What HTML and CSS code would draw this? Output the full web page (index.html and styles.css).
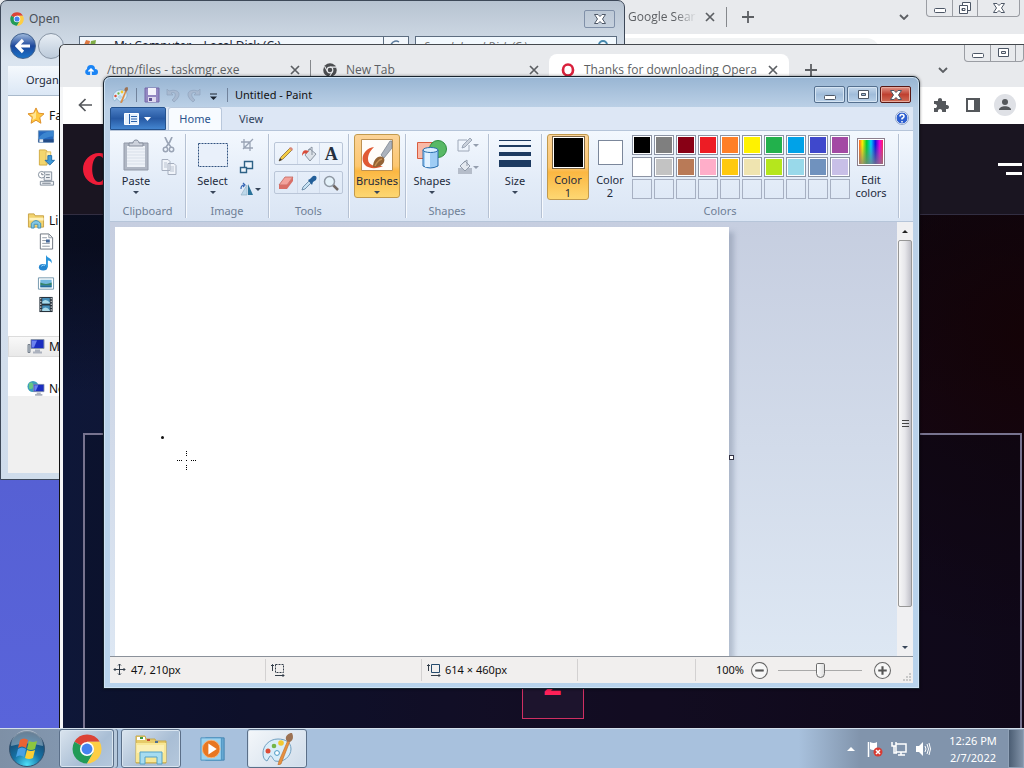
FILE: index.html
```html
<!DOCTYPE html>
<html lang="en">
<head>
  <meta charset="UTF-8">
  <title>Untitled - Paint</title>
  <link rel="stylesheet" href="styles.css">
</head>
<body>
  <!-- shared icons -->
  <svg class="defs" aria-hidden="true">
    <symbol id="chrome" viewBox="0 0 32 32">
      <path d="M16 16 2.600 8.300A15.500 15.500 0 0 1 29.500 8.300H16z" fill="#dc4437"/>
      <path d="M16 16 2.600 8.300A15.500 15.500 0 0 0 16 31.500l7-12z" fill="#229b57"/>
      <path d="M16 8.300h13.500A15.500 15.500 0 0 1 16 31.500l7-12z" fill="#fdce45"/>
      <circle cx="16" cy="16" r="7.500" fill="#fff"/>
      <circle cx="16" cy="16" r="5.800" fill="#4583ee"/>
    </symbol>
    <symbol id="chrome-gray" viewBox="0 0 32 32">
      <circle cx="16" cy="16" r="15.500" fill="#4b4d50"/>
      <circle cx="16" cy="16" r="6.500" fill="none" stroke="#e8eaed" stroke-width="2.500"/>
      <path d="M16 9.500h14M10.400 19.300 3.500 7.500M21.600 19.300l-7 12" stroke="#e8eaed" stroke-width="2.500"/>
    </symbol>
    <symbol id="palette" viewBox="0 0 32 32">
      <path d="M17 6C8 6 2 13 2 20c0 4 1 7 4 8l3-5c2-1 3 4 5 5 9 2 16-5 16-12 0-7-6-10-13-10z" fill="#d9edf9" stroke="#6f9fc0" stroke-width="1"/>
      <circle cx="7" cy="18" r="2.500" fill="#dc4c35"/>
      <circle cx="13" cy="13" r="2.300" fill="#73b548"/>
      <circle cx="20" cy="10" r="2.800" fill="#f2c830"/>
      <circle cx="16" cy="20" r="2.400" fill="#fff" stroke="#4a99c4"/>
      <path d="m27 7 2 1-9 23-3 1 1-4z" fill="#e8913f" stroke="#b86b28" stroke-width=".6"/>
      <path d="M26 8c-3-3 0-8 5-8 2 4 1 8-3 9z" fill="#9c7253"/>
    </symbol>
    <symbol id="x" viewBox="0 0 10 10"><path d="m1 1 8 8M9 1 1 9" fill="none" stroke="currentColor" stroke-width="1.700"/></symbol>
    <symbol id="plus" viewBox="0 0 12 12"><path d="M6 0v12M0 6h12" stroke="currentColor" stroke-width="1.800"/></symbol>
    <symbol id="chev" viewBox="0 0 10 6"><path d="m1 1 4 4 4-4" fill="none" stroke="currentColor" stroke-width="1.800"/></symbol>
    <symbol id="w-min" viewBox="0 0 14 12"><rect x="1.500" y="6.500" width="11" height="4" rx="1" fill="#fff" stroke="#4d5766"/></symbol>
    <symbol id="w-max" viewBox="0 0 14 12"><path d="M2.500 1.500h10v8h-10zM5.500 4.500h4v2h-4z" fill="#fff" fill-rule="evenodd" stroke="#4d5766"/></symbol>
    <symbol id="w-restore" viewBox="0 0 14 12"><path d="M4.500.5h8v8h-8z" fill="#fff" stroke="#4d5766"/><path d="M1.500 3.500h8v8h-8zM4 6.500h3v2H4z" fill="#fff" fill-rule="evenodd" stroke="#4d5766"/></symbol>
    <symbol id="w-close" viewBox="0 0 14 12"><path d="M1.500 1.500H5l2 2 2-2h3.500L9.500 6l3 4.500H9l-2-2-2 2H1.500l3-4.500z" fill="#fff" stroke="#4d5766"/></symbol>
    <symbol id="monitor" viewBox="0 0 18 16">
      <path d="M4 1h13v9H4z" fill="#1b2ec0" stroke="#8794ac"/><path d="m5 2 5 0-3 7H5z" fill="#6c83ef"/>
      <path d="M8 11h5v2H8zM6 13h9v2H6z" fill="#acb2be"/>
    </symbol>
  </svg>

  <main class="desktop">
    <section class="window chrome-back" aria-label="Google Search">
      <div class="tabstrip">
        <span class="tab-title fade">Google Sear</span>
        <button class="icon-btn" aria-label="Close tab"><svg class="i10"><use href="#x"/></svg></button>
        <span class="tab-sep"></span>
        <button class="icon-btn" aria-label="New tab"><svg class="i12"><use href="#plus"/></svg></button>
        <button class="icon-btn push" aria-label="Search tabs"><svg class="i10x6"><use href="#chev"/></svg></button>
        <div class="glass-controls">
          <button aria-label="Minimize"><svg><use href="#w-min"/></svg></button>
          <button aria-label="Restore"><svg><use href="#w-restore"/></svg></button>
          <button class="wide" aria-label="Close"><svg><use href="#w-close"/></svg></button>
        </div>
      </div>
      <div class="omnibox"></div>
    </section>

    <section class="window open-dialog" aria-label="Open">
      <header class="dialog-title">
        <svg class="i14"><use href="#chrome"/></svg>
        <span>Open</span>
        <button class="dialog-close" aria-label="Close"><svg><use href="#w-close"/></svg></button>
      </header>
      <div class="nav-row">
        <button class="nav-back" aria-label="Back"><svg viewBox="0 0 16 16"><path d="M8 2 2 8l6 6M2 8h13" fill="none" stroke="#fff" stroke-width="3.200"/></svg></button>
        <button class="nav-fwd" aria-label="Forward"></button>
        <div class="address">
          <svg class="i14" viewBox="0 0 14 14"><path d="m3 1 4 1-1 5-5-1z" fill="#dd7841"/><path d="m8 2 5-1-1 6-5 0z" fill="#80ad47"/><path d="m1 7 5 1-1 5-4-1z" fill="#4f8bd3"/><path d="m7 8 5 0-1 5-5 0z" fill="#edc741"/></svg>
          <span>▸ My Computer ▸ Local Disk (C:) ▸</span>
        </div>
        <button class="refresh" aria-label="Refresh"><svg viewBox="0 0 12 12"><path d="M9 2a5 5 0 1 0 2 4" fill="none" stroke="#5b7a9a" stroke-width="1.500"/></svg></button>
        <div class="search-box"><input type="text" aria-label="Search" placeholder="Search Local Disk (C:)"><svg viewBox="0 0 12 12"><circle cx="6" cy="5" r="4" fill="none" stroke="#4688ad" stroke-width="2"/></svg></div>
      </div>
      <div class="dialog-toolbar">Organize</div>
      <nav class="places">
        <ul>
          <li class="head"><svg viewBox="0 0 18 18"><path d="m9 1 2.500 5.500 6 .7-4.500 4 1.200 6L9 14l-5.200 3.200 1.200-6-4.500-4 6-.7z" fill="#ffc93f" stroke="#dc8b24"/><path d="M9 4v8l-4 2 1-4-3-2 4-1z" fill="#ffe591"/></svg>Favorites</li>
          <li><svg viewBox="0 0 18 18"><path d="M1 3h16v12H1z" fill="#2468be" stroke="#6b91b8"/><path d="M1 11c5-7 10-7 16-8v6c-6 0-9 2-14 4z" fill="#3b85cf"/><path d="M1 12h16v3H1z" fill="#244c87"/><path d="M2 12h4v3H2z" fill="#e5edf6"/></svg></li>
          <li><svg viewBox="0 0 18 18"><path d="M2 1h6l2 1v15H2z" fill="#f3d66e" stroke="#d0aa42"/><path d="M9 3h5v12H9z" fill="#ffeda7" stroke="#dbb95b"/><path d="M11 7h4v5h3l-5 5-5-5h3z" fill="#3d99d9" stroke="#236ca9"/></svg></li>
          <li><svg viewBox="0 0 18 18"><path d="M7 2h8v9H7zM3 12h14v4H3z" fill="#eef1f4" stroke="#828d9b"/><circle cx="4.500" cy="5" r="3.500" fill="#fff" stroke="#828d9b"/><path d="M4.500 3v2h2M9 5h4M9 8h4M5 14h9" fill="none" stroke="#6d7885"/></svg></li>
          <li class="head gap"><svg viewBox="0 0 18 18"><path d="M1 2h6l1 2h9v12H1z" fill="#f2d36e" stroke="#c8a244"/><path d="M2 6h15v3H2z" fill="#fff2bc"/><path d="M4 17v-5q5-6 10 0v5h-3v-4H7v4z" fill="#82c6e3" stroke="#408fb8"/></svg>Libraries</li>
          <li><svg viewBox="0 0 18 18"><path d="M3 1h9l4 4v12H3z" fill="#fff" stroke="#6a727c"/><path d="M12 1v4h4M5 5h5M5 8h4M5 11h8M5 14h8" fill="none" stroke="#8f98a3"/><path d="M9 7h4v3H9z" fill="#456899"/></svg></li>
          <li><svg viewBox="0 0 18 18"><ellipse cx="6" cy="14" rx="4.500" ry="3.500" fill="#2385d0"/><path d="M9 14V1c2 4 7 3 6 9-1-2-2-3-4-3v7z" fill="#2995dc"/><path d="M4 13q2-2 4-1" stroke="#9edbff" fill="none"/></svg></li>
          <li><svg viewBox="0 0 18 18"><path d="M1 3h16v12H1z" fill="#fff" stroke="#7196ac"/><path d="M3 5h12v8H3z" fill="#73b8df"/><path d="M3 8q6 3 12 0v3H3z" fill="#36866a"/><path d="M3 11h12v2H3z" fill="#236b9b"/></svg></li>
          <li><svg viewBox="0 0 18 18"><path d="M2 1h14v16H2z" fill="#27323c"/><path d="M5 2h8v6H5zM5 10h8v6H5z" fill="#448db8"/><path d="M5 6q4-4 8 1v1H5zM5 14q4-4 8 1v1H5z" fill="#a9d8e7"/><path d="M3.500 2v15M14.500 2v15" stroke="#fff" stroke-dasharray="1.500 1.500"/></svg></li>
          <li class="head gap selected"><svg viewBox="0 0 18 16"><path d="M1 6h2v8H1z" fill="#bcc5cf" stroke="#77818d"/><use href="#monitor"/></svg>My Computer</li>
          <li class="head gap"><svg viewBox="0 0 18 16"><circle cx="6" cy="6" r="5.500" fill="#3c9fbb"/><path d="M2 3q4-3 4 2t-4 3z" fill="#68c783"/><use href="#monitor" x="3" y="3" width="15" height="13"/></svg>Network</li>
        </ul>
      </nav>
    </section>

    <section class="window opera-win" aria-label="Thanks for downloading Opera">
      <div class="tabstrip">
        <div class="tab first">
          <svg class="i14" viewBox="0 0 14 14"><path d="M3.500 12A3.200 3.200 0 0 1 3 6a4 4 0 0 1 8 0 3 3 0 0 1 0 6z" fill="#1a84f5"/><path d="M7 12V6M4.500 8.500 7 6l2.500 2.500" fill="none" stroke="#fff" stroke-width="1.500"/></svg>
          <span class="tab-title">/tmp/files - taskmgr.exe</span>
          <button class="icon-btn" aria-label="Close tab"><svg class="i10"><use href="#x"/></svg></button>
        </div>
        <span class="tab-sep"></span>
        <div class="tab">
          <svg class="i14"><use href="#chrome-gray"/></svg>
          <span class="tab-title">New Tab</span>
          <button class="icon-btn" aria-label="Close tab"><svg class="i10"><use href="#x"/></svg></button>
        </div>
        <div class="tab active">
          <svg class="i14" viewBox="0 0 14 14"><ellipse cx="7" cy="7" rx="5" ry="5.500" fill="none" stroke="#d9213c" stroke-width="2.700"/></svg>
          <span class="tab-title">Thanks for downloading Opera</span>
          <button class="icon-btn" aria-label="Close tab"><svg class="i10"><use href="#x"/></svg></button>
        </div>
        <button class="icon-btn newtab" aria-label="New tab"><svg class="i12"><use href="#plus"/></svg></button>
        <button class="icon-btn push" aria-label="Search tabs"><svg class="i10x6"><use href="#chev"/></svg></button>
        <div class="glass-controls">
          <button aria-label="Minimize"><svg><use href="#w-min"/></svg></button>
          <button aria-label="Maximize"><svg><use href="#w-max"/></svg></button>
          <button class="clip" aria-label="Close"></button>
        </div>
      </div>
      <div class="toolbar">
        <button class="icon-btn" aria-label="Back"><svg class="i14" viewBox="0 0 14 14"><path d="M7.500 1 1.500 7l6 6M1.500 7H14" fill="none" stroke="currentColor" stroke-width="1.700"/></svg></button>
        <button class="icon-btn push" aria-label="Extensions"><svg class="i16" viewBox="0 0 16 16"><path d="M1 4h4c-1-4 5-4 4 0h4v4c4-1 4 5 0 4v3H9c1-4-5-4-4 0H1v-4c4 1 4-5 0-4z" fill="currentColor"/></svg></button>
        <button class="icon-btn" aria-label="Side panel"><svg class="i14" viewBox="0 0 14 14"><path d="M0 0h14v14H0zM2 2v10h6V2z" fill="currentColor" fill-rule="evenodd"/></svg></button>
        <button class="icon-btn avatar" aria-label="Profile"><svg class="i14" viewBox="0 0 14 14"><circle cx="7" cy="4" r="3" fill="currentColor"/><path d="M1 12c0-5 12-5 12 0z" fill="currentColor"/></svg></button>
      </div>
      <div class="page">
        <div class="page-header">
          <svg class="opera-logo" viewBox="0 0 32 32"><path d="M16 0a16 16 0 1 0 0 32 16 16 0 1 0 0-32zm0 3c9 0 9 26 0 26S7 3 16 3z" fill="#ee1c38" fill-rule="evenodd"/></svg>
          <button class="burger" aria-label="Menu"><i></i><i></i></button>
        </div>
        <div class="step-panel"><div class="step-number">2</div></div>
      </div>
    </section>

    <section class="window paint" aria-label="Paint">
      <header class="titlebar">
        <svg class="i16"><use href="#palette"/></svg>
        <span class="bar-sep"></span>
        <button class="qat" aria-label="Save"><svg viewBox="0 0 16 16"><path d="M1 1h14v14H1z" fill="#9488c2" stroke="#7568a8"/><path d="M4 1h8v7H4z" fill="#f4f3fb"/><path d="M4 10h8v5H4z" fill="#ded9ee"/><path d="M5 11h3v3H5z" fill="#5f5191"/></svg></button>
        <button class="qat" aria-label="Undo"><svg viewBox="0 0 16 16"><path d="M2 2v6h6L6 6c5-2 6 3 1 7l2 2c9-7 5-14-5-11z" fill="#a8b9d0" stroke="#8fa3bd" stroke-width=".7"/></svg></button>
        <button class="qat" aria-label="Redo"><svg viewBox="0 0 16 16"><path d="M14 2v6H8l2-2c-5-2-6 3-1 7l-2 2C-2 8 2 1 12 4z" fill="#a8b9d0" stroke="#8fa3bd" stroke-width=".7"/></svg></button>
        <button class="qat more" aria-label="Customize toolbar"><svg viewBox="2 0 12 16"><path d="M5 7h7" stroke="#1b2430"/><path d="M5 9.500h7L8.500 13z" fill="#1b2430"/></svg></button>
        <span class="bar-sep"></span>
        <h1>Untitled - Paint</h1>
        <div class="controls">
          <button aria-label="Minimize"><svg><use href="#w-min"/></svg></button>
          <button aria-label="Maximize"><svg><use href="#w-max"/></svg></button>
          <button class="close" aria-label="Close"><svg><use href="#w-close"/></svg></button>
        </div>
      </header>

      <div class="ribbon-tabs">
        <button class="file-menu" aria-label="Paint menu"><svg viewBox="0 0 28 12"><path d="M.5.5h14v11H.5z" fill="#e5f0fc" stroke="#fff"/><path d="M5.500 1v10M7 3.500h6M7 6h6M7 8.500h6" stroke="#2a61aa"/><path d="M20 4h7l-3.500 4z" fill="#fff"/></svg></button>
        <button class="rtab current">Home</button>
        <button class="rtab">View</button>
        <button class="help" aria-label="Help"><svg viewBox="0 0 14 14"><circle cx="7" cy="7" r="6" fill="#2d5fd0" stroke="#fff"/><circle cx="7" cy="7" r="6.500" fill="none" stroke="#7a93c0" stroke-width=".8"/><path d="M5 5.500q0-2 2-2t2 2q0 1-2 2v1M7 10v1.500" fill="none" stroke="#fff" stroke-width="1.500"/></svg></button>
      </div>

      <div class="ribbon">
        <div class="group clipboard">
          <div class="tools">
            <button class="big">
              <svg viewBox="0 0 32 32"><path d="M4 4h24v27H4z" fill="#b0b7c4" stroke="#9299a8"/><path d="M7 7h18v21H7z" fill="#eef2f8"/><path d="M7 10h18M7 13h18M7 16h18M7 19h18M7 22h18M7 25h18" stroke="#d8dfe9"/><path d="M9 7V4h4c0-4 6-4 6 0h4v3z" fill="#cdd2dc" stroke="#858d9c"/></svg>
              Paste<i class="caret"></i>
            </button>
            <div class="stack two">
              <button aria-label="Cut"><svg viewBox="0 0 16 16"><path d="M4 0q2 6 6 10M11 0Q9 6 5 10" fill="none" stroke="#9aa4b5" stroke-width="1.700"/><circle cx="4.500" cy="12.500" r="2.200" fill="none" stroke="#9aa4b5" stroke-width="1.500"/><circle cx="10.500" cy="12.500" r="2.200" fill="none" stroke="#9aa4b5" stroke-width="1.500"/></svg></button>
              <button aria-label="Copy"><svg viewBox="0 0 16 16"><path d="M1 .5h6l2 2v9H1zM7 4.500h6l2 2v9H7z" fill="#f0f4fa" stroke="#a6afbf"/><path d="M3 4h3M3 6h3M3 8h3M9 8h4M9 10h4M9 12h4" stroke="#bac3d1"/></svg></button>
            </div>
          </div>
          <div class="label">Clipboard</div>
        </div>
        <div class="group image">
          <div class="tools">
            <button class="big">
              <svg viewBox="0 0 32 32"><path d="M1.500 4.500h29v23h-29z" fill="#e9f0fa" stroke="#31527f" stroke-dasharray="2 1"/></svg>
              Select<i class="caret"></i>
            </button>
            <div class="stack">
              <button aria-label="Crop"><svg viewBox="0 0 16 16"><path d="M5 2v9h9M2 5h9v9M4 12 14 2" fill="none" stroke="#9aa4b5" stroke-width="1.300"/></svg></button>
              <button aria-label="Resize"><svg viewBox="0 0 16 16"><path d="M5.500 2.500h8v7h-8z" fill="#eef5fb" stroke="#2d6186" stroke-width="1.400"/><path d="M1.500 8.500h6v5h-6z" fill="#eef5fb" stroke="#2d6186" stroke-width="1.400"/></svg></button>
              <button aria-label="Rotate"><svg viewBox="0 0 16 16"><path d="M8 4v10H2z" fill="#bdd8ea" stroke="#8cabc0" stroke-width=".6"/><path d="M9 3v11h5z" fill="#297299"/><path d="M2 8q0-4 3-4M4 2l2 2-2 2" fill="none" stroke="#3465b4" stroke-width="1.200"/></svg><i class="caret"></i></button>
            </div>
          </div>
          <div class="label">Image</div>
        </div>
        <div class="group pens">
          <div class="tools pen-rows">
            <div class="pen-row">
              <button aria-label="Pencil"><svg viewBox="0 0 16 16"><path d="m1 15 2-4 9-9 2 2-9 9z" fill="#f2cc43" stroke="#8a6a3a" stroke-width=".8"/><path d="m1 15 1-3 2 2z" fill="#333"/><path d="m11 2 2-1 2 2-1 2z" fill="#d9877b"/></svg></button>
              <button aria-label="Fill"><svg viewBox="0 0 16 16"><path d="m9 3 6 5-6 7-5-6z" fill="#dce2e8" stroke="#8a94a1"/><path d="M11 9V1L7 4" fill="none" stroke="#8a94a1"/><path d="M8 5Q1 2 1 10q2-4 4-2z" fill="#d84c39"/></svg></button>
              <button class="glyph-a" aria-label="Text">A</button>
            </div>
            <div class="pen-row">
              <button aria-label="Eraser"><svg viewBox="0 0 16 16"><path d="m7 2 8 0-6 8H1z" fill="#f3a39c" stroke="#c1665e" stroke-width=".8"/><path d="M1 10h8l6-8v4l-6 8H1z" fill="#d96f67"/></svg></button>
              <button aria-label="Color picker"><svg viewBox="0 0 16 16"><path d="m1 15 1-3 6-6 2 2-6 6z" fill="#c7e2f3" stroke="#5a7c9c" stroke-width=".8"/><path d="m7 5 2-1 3-3q5-1 3 4l-3 2-1 3z" fill="#235f99"/></svg></button>
              <button aria-label="Magnifier"><svg viewBox="0 0 16 16"><path d="m10 10 5 5" stroke="#706966" stroke-width="2.500"/><circle cx="6.500" cy="6.500" r="5" fill="#e4f2fa" stroke="#8f98a3" stroke-width="1.500"/></svg></button>
            </div>
          </div>
          <div class="label">Tools</div>
        </div>
        <div class="group brushes">
          <div class="tools">
            <button class="big on">
              <svg viewBox="0 0 32 32"><path d="M.5.5h31v31H.5z" fill="#fffdfa" stroke="#bd9152"/><path d="M13 8C4 9-2 19 4 26c4 4 12 4 18 1-8 0-15 0-15-7 0-5 3-9 6-12z" fill="#e05a34"/><path d="m20 16 9-14h2v7l-8 10z" fill="#acb3bd" stroke="#737b86" stroke-width=".7"/><path d="M12 28c0-8 6-13 11-9 2 5-4 10-11 9z" fill="#936335"/><path d="M14 27q3-6 7-7" stroke="#c69054" fill="none" stroke-width="1.500"/></svg>
              Brushes<i class="caret"></i>
            </button>
          </div>
        </div>
        <div class="group shapes">
          <div class="tools">
            <button class="big">
              <svg viewBox="0 0 32 32"><path d="M1.500 3.500h16v16h-16z" fill="#f9b9a7" stroke="#d95d40"/><circle cx="22" cy="10" r="8.500" fill="#58b965" stroke="#2f8d40"/><path d="M7 11v16q7 4 15 0V11z" fill="#9fcdf5" stroke="#286dac"/><path d="M9 13h5v15H9z" fill="#e0f0ff"/><ellipse cx="14.500" cy="11" rx="7.500" ry="2.500" fill="#daefff" stroke="#286dac"/></svg>
              Shapes<i class="caret"></i>
            </button>
            <div class="stack two">
              <button aria-label="Outline"><svg viewBox="0 0 16 16"><path d="M10 3H1v11h11V8" fill="none" stroke="#9ea8b8"/><path d="m5 11 1-3 7-7 2 2-7 7z" fill="#cad1db" stroke="#8d98a9" stroke-width=".8"/></svg><i class="caret dim"></i></button>
              <button aria-label="Fill shape"><svg viewBox="0 0 16 16"><path d="M1 9h14v6H1z" fill="#b5bdca"/><path d="m8 2 5 5-5 5-5-5z" fill="#e4e9f0" stroke="#919baa"/><path d="M10 7V1L6 4" fill="none" stroke="#919baa"/></svg><i class="caret dim"></i></button>
            </div>
          </div>
          <div class="label">Shapes</div>
        </div>
        <div class="group size">
          <div class="tools">
            <button class="big">
              <svg viewBox="0 0 32 32"><path d="M0 1h32v1H0zM0 6h32v2H0zM0 13h32v4H0zM0 21h32v7H0z" fill="#1c3a61"/></svg>
              Size<i class="caret"></i>
            </button>
          </div>
        </div>
        <div class="group colors">
          <div class="tools">
            <button class="big on color-one"><span class="chip black"></span>Color<br>1</button>
            <button class="big color-two"><span class="chip white"></span>Color<br>2</button>
            <div class="swatches" id="swatches"></div>
            <button class="big edit"><span class="spectrum"></span>Edit<br>colors</button>
          </div>
          <div class="label">Colors</div>
        </div>
      </div>

      <div class="workspace">
        <div class="viewport">
          <div class="canvas">
            <i class="dot"></i>
            <svg class="cross" viewBox="0 0 19 19"><path d="M9.500 0v6M9.500 14v6M0 9.500h6M14 9.500h6M9 9.500h1" stroke="#000" stroke-dasharray="1 1"/></svg>
            <i class="handle"></i>
          </div>
        </div>
        <div class="scrollbar">
          <button aria-label="Scroll up"><i class="caret up"></i></button>
          <div class="thumb"><i></i><i></i><i></i></div>
          <button aria-label="Scroll down"><i class="caret"></i></button>
        </div>
      </div>

      <footer class="statusbar">
        <div class="cell"><svg viewBox="0 0 14 14"><path d="M6.500 1v11M1 6.500h11M5 2.500l1.500-1.500L8 2.500M5 10.500l1.500 1.500L8 10.500M2.500 5 1 6.500 2.500 8M10.500 5 12 6.500 10.500 8" fill="none" stroke="#333d49"/></svg>47, 210px</div>
        <div class="cell"><svg viewBox="0 0 14 14"><path d="M4.500 1.500h8v8h-8z" fill="none" stroke="#333d49" stroke-dasharray="2 1"/><path d="M1.500 8V1.500M0 3l1.500-1.500L3 3M4 12.500h9M11.500 11l1.500 1.500-1.500 1.500" fill="none" stroke="#333d49"/></svg></div>
        <div class="cell"><svg viewBox="0 0 14 14"><path d="M4.500 1.500h8v8h-8z" fill="none" stroke="#244a6c"/><path d="M1.500 8V1.500M0 3l1.500-1.500L3 3M4 12.500h9M11.500 11l1.500 1.500-1.500 1.500" fill="none" stroke="#333d49"/></svg>614 × 460px</div>
        <div class="cell rest"></div>
        <div class="zoom">
          <label for="zoom">100%</label>
          <button aria-label="Zoom out"><svg viewBox="0 0 16 16"><circle cx="8" cy="8" r="7.500" fill="#f7f7f7" stroke="#666"/><path d="M4 8h8" stroke="#555" stroke-width="2"/></svg></button>
          <input type="range" id="zoom" min="0" max="100" value="50">
          <button aria-label="Zoom in"><svg viewBox="0 0 16 16"><circle cx="8" cy="8" r="7.500" fill="#f7f7f7" stroke="#666"/><path d="M4 8h8M8 4v8" stroke="#555" stroke-width="2"/></svg></button>
        </div>
        <svg class="grip" viewBox="0 0 10 10"><path d="M8 1v2M8 4v2M5 4v2M8 7v2M5 7v2M2 7v2" stroke="#c8c8c8" stroke-width="2"/></svg>
      </footer>
    </section>
  </main>

  <footer class="taskbar">
    <button class="start" aria-label="Start">
      <svg viewBox="0 0 38 38">
        <defs><radialGradient id="orb" cx=".5" cy=".95" r=".9"><stop offset="0" stop-color="#4ee0f8"/><stop offset=".45" stop-color="#1672a5"/><stop offset="1" stop-color="#173e62"/></radialGradient></defs>
        <circle cx="19" cy="19" r="17.500" fill="url(#orb)" stroke="#35526e"/>
        <path d="M3 16a16 16 0 0 1 32 0q-16-5-32 0z" fill="#fff" opacity=".35"/>
        <path d="M12 10q4-3 8 0l-2 8q-4-3-8 0z" fill="#ea6334"/><path d="M21 11q4 2 8 0l-2 8q-4 2-8 0z" fill="#8cc63f"/>
        <path d="M10 19q4-3 8 0l-2 8q-4-3-8 0z" fill="#48a1e5"/><path d="M19 20q4 2 8 0l-2 8q-4 2-8 0z" fill="#fbce35"/>
      </svg>
    </button>
    <button class="task open stacked" aria-label="Google Chrome"><svg class="i30"><use href="#chrome"/></svg></button>
    <button class="task open" aria-label="Explorer">
      <svg class="i32" viewBox="0 0 32 32"><path d="M1 3h9l1 3h9l1 2h10v22H1z" fill="#e6cb69" stroke="#c7a94c"/><path d="M2 4h8v3H2z" fill="#fff"/><path d="M5 4h3v2H5z" fill="#3f9a3d"/><path d="M12 6h3v2h-3z" fill="#c4452d"/><path d="M20 8h3v2h-3z" fill="#4f7090"/><path d="M1 10h30v19H1z" fill="#f8e795"/><path d="M2 12h27v8H2z" fill="#fcf0b4"/><path d="M5 31V19h22v12h-5v-7H10v7z" fill="#a6dcf0" stroke="#54a1c6"/></svg>
    </button>
    <button class="task" aria-label="Media Player">
      <svg class="i26" viewBox="0 0 28 28"><path d="M6 2h20v24H6z" fill="#65a8d2" stroke="#4384b1"/><path d="M1 2h22v24H1z" fill="#9bd2ef" stroke="#4b91be"/><circle cx="12" cy="14" r="9.500" fill="#e87722" stroke="#f5b57d"/><path d="m9 8 9 6-9 6z" fill="#fff"/></svg>
    </button>
    <button class="task open current" aria-label="Paint"><svg class="i32"><use href="#palette"/></svg></button>
    <div class="tray">
      <button aria-label="Show hidden icons"><svg viewBox="0 0 16 16"><path d="m4 10 4-4 4 4z" fill="#fff"/></svg></button>
      <svg viewBox="0 0 16 16"><path d="M1.500 1v15" stroke="#fff" stroke-width="1.500"/><path d="M3 1q4 2 7 0v7q-4 2-7 0z" fill="#fff"/><circle cx="11" cy="11" r="4.500" fill="#d83b32"/><path d="m9 9 4 4M13 9l-4 4" stroke="#fff" stroke-width="1.500"/></svg>
      <svg viewBox="0 0 16 16"><path d="M5 3h10v8H5zM7 14h7M10 11v3M1 1v4h4V1M3 5v7h3" fill="none" stroke="#fff" stroke-width="1.500"/></svg>
      <svg viewBox="0 0 16 16"><path d="M1 5h3l4-4v14l-4-4H1z" fill="#fff"/><path d="M10 5q2 3 0 6M12 3q3 5 0 10M14 2q3 6 0 12" fill="none" stroke="#fff"/></svg>
      <div class="clock">12:26 PM<br>2/7/2022</div>
    </div>
    <button class="show-desktop" aria-label="Show desktop"></button>
  </footer>

  <script>
    // Palette rows, the last ten slots stay empty
    var colors = [
      '#000000', '#7f7f7f', '#880015', '#ed1c24', '#ff7f27', '#fff200', '#22b14c', '#00a2e8', '#3f48cc', '#a349a4',
      '#ffffff', '#c3c3c3', '#b97a57', '#ffaec9', '#ffc90e', '#efe4b0', '#b5e61d', '#99d9ea', '#7092be', '#c8bfe7'
    ];
    var box = document.getElementById('swatches');
    for (var i = 0; i < 30; i++) {
      var b = document.createElement('button');
      if (colors[i]) {
        b.style.background = colors[i];
        b.setAttribute('aria-label', colors[i]);
      } else {
        b.className = 'empty';
        b.setAttribute('aria-label', 'Empty');
      }
      box.appendChild(b);
    }
  </script>
</body>
</html>
```
FILE: styles.css
```css
* {
  box-sizing: border-box;
}
body {
  margin: 0;
  height: 100vh;
  display: flex;
  flex-direction: column;
  overflow: hidden;
  font: 11px/14px "Noto Sans", "Open Sans", sans-serif;
  color: #1e2b3c;
}
button {
  padding: 0;
  border: 0;
  background: none;
  font: inherit;
  color: inherit;
}
svg {
  display: block;
  flex: none;
}
.defs {
  position: absolute;
  width: 0;
  height: 0;
}
.i10 { width: 10px; height: 10px; }
.i10x6 { width: 10px; height: 6px; }
.i12 { width: 12px; height: 12px; }
.i14 { width: 14px; height: 14px; }
.i16 { width: 16px; height: 16px; }
.i26 { width: 26px; height: 26px; }
.i30 { width: 30px; height: 30px; }
.i32 { width: 32px; height: 32px; }

.desktop {
  flex: 1;
  position: relative;
  overflow: hidden;
  background: linear-gradient(#5059c8, #5964da);
}
.window {
  position: absolute;
  overflow: hidden;
  display: flex;
  flex-direction: column;
}

/* browser windows */
.tabstrip {
  display: flex;
  align-items: center;
  background: #e8eaed;
  color: #5c5f63;
}
.tab-title {
  font: 12px/16px "Open Sans", sans-serif;
  white-space: nowrap;
}
.icon-btn {
  display: flex;
  align-items: center;
  justify-content: center;
  flex: none;
}
.push {
  margin-left: auto;
}
.tab-sep {
  width: 1px;
  height: 20px;
  background: #85888c;
}
.glass-controls {
  display: flex;
  align-self: flex-start;
  border: 1px solid #9a9da3;
  border-top: 0;
  border-radius: 0 0 4px 4px;
}
.glass-controls button {
  width: 25px;
  height: 16px;
  display: flex;
  align-items: center;
  justify-content: center;
}
.glass-controls button + button {
  border-left: 1px solid #9a9da3;
}
.glass-controls .wide { width: 42px; }
.glass-controls .clip { width: 8px; }
.glass-controls svg {
  width: 14px;
  height: 12px;
}
.chrome-back {
  top: 0;
  left: 0;
  right: 0;
  height: 120px;
  background: #fff;
}
.chrome-back .tabstrip {
  height: 34px;
  padding: 0 4px 0 628px;
}
.chrome-back .fade {
  width: 72px;
  margin-right: 5px;
  -webkit-mask-image: linear-gradient(to right, #000 65%, transparent 96%);
  mask-image: linear-gradient(to right, #000 65%, transparent 96%);
}
.chrome-back .tab-sep { margin: 0 15px 0 11px; }
.chrome-back .push { margin-right: 17px; }
.omnibox {
  height: 28px;
  margin: 4px 144px 0 100px;
  border-radius: 14px;
  background: #f1f3f4;
}

.opera-win {
  top: 44px;
  left: 59px;
  right: 0;
  bottom: 0;
  border-top: 1px solid #44484d;
  border-left: 1px solid #111;
  border-top-left-radius: 6px;
  background: #f5f6f8;
  padding-left: 3px;
}
.opera-win .tabstrip {
  height: 42px;
  margin-left: -3px;
}
.opera-win .tab {
  align-self: flex-end;
  display: flex;
  align-items: center;
  gap: 9px;
  height: 33px;
  width: 238px;
  padding: 0 10px 2px 12px;
}
.opera-win .tab.first {
  width: 250px;
  padding-left: 24px;
}
.opera-win .tab.active {
  width: 240px;
  padding-right: 11px;
  background: #fff;
  border-radius: 8px 8px 0 0;
}
.tab .tab-title { flex: 1; }
.opera-win .newtab { margin: 8px 0 0 16px; }
.opera-win .tabstrip > .push { margin: 8px 16px 0 auto; }
.opera-win .tab-sep { margin-top: 8px; }
.toolbar {
  height: 37px;
  display: flex;
  align-items: center;
  gap: 17px;
  padding: 0 8px 2px 15px;
  background: #fff;
  color: #54575b;
}
.toolbar .avatar {
  width: 22px;
  height: 22px;
  margin-left: -3px;
  border-radius: 50%;
  background: #dfe1e6;
}
.page {
  flex: 1;
  display: flex;
  flex-direction: column;
  background:
    radial-gradient(circle at 100% 35%, #140307, transparent 30%),
    linear-gradient(rgba(5, 6, 14, .6) 20%, transparent 45%),
    linear-gradient(to right, #0e1738, #180f28 50%, #140818);
}
.page-header {
  height: 91px;
  display: flex;
  align-items: center;
  justify-content: space-between;
  padding: 0 2px 0 20px;
  background: #1a1521;
  border-bottom: 1px solid #322e42;
}
.opera-logo {
  width: 32px;
  height: 32px;
}
.burger {
  display: flex;
  flex-direction: column;
  align-items: flex-end;
  gap: 6px;
}
.burger i {
  width: 24px;
  height: 3px;
  background: #fff;
}
.burger i + i { width: 16px; }
.step-panel {
  flex: 1;
  display: flex;
  align-items: flex-end;
  justify-content: center;
  margin: 218px 2px 0 20px;
  padding-bottom: 9px;
  border: 2px solid #77738f;
  border-bottom: 0;
  background: rgba(8, 10, 26, .3);
}
.step-number {
  width: 62px;
  height: 62px;
  border: 1px solid #d02f62;
  background: #1d142d;
  color: #ff2058;
  font: bold 32px/50px "Open Sans", sans-serif;
  text-align: center;
}

/* file dialog */
.open-dialog {
  top: 0;
  left: 0;
  width: 625px;
  height: 480px;
  border: 1px solid #3d4858;
  border-radius: 7px 7px 0 0;
  padding: 0 7px 6px;
  background: linear-gradient(#b7c3d1, #dae4ef 60px, #cfdceb);
}
.dialog-title {
  height: 35px;
  display: flex;
  align-items: center;
  gap: 5px;
  padding: 0 2px;
  color: #4a5058;
  font-size: 12px;
}
.dialog-close {
  width: 31px;
  height: 18px;
  margin-left: auto;
  display: flex;
  align-items: center;
  justify-content: center;
  border: 1px solid #8090a8;
  border-radius: 2px;
}
.dialog-close svg {
  width: 14px;
  height: 12px;
}
.nav-row {
  display: flex;
  align-items: center;
  height: 20px;
}
.nav-back,
.nav-fwd {
  width: 26px;
  height: 26px;
  flex: none;
  display: flex;
  align-items: center;
  justify-content: center;
  margin-left: 2px;
  border: 1px solid #40618e;
  border-radius: 50%;
  background: linear-gradient(#9db8dc, #1c479b 50%, #1a73c9);
}
.nav-back svg {
  width: 16px;
  height: 16px;
}
.nav-fwd {
  border-color: #8895a5;
  background: linear-gradient(#e8eef5, #bccada);
}
.address {
  flex: 1;
  height: 21px;
  display: flex;
  align-items: center;
  gap: 8px;
  margin-left: 15px;
  padding-left: 3px;
  border: 1px solid #5d6d80;
  background: #f2f7fc;
  font-size: 12px;
}
.refresh {
  width: 26px;
  height: 21px;
  margin-left: -1px;
  border: 1px solid #5d6d80;
  background: #f2f7fc;
}
.refresh svg,
.search-box svg {
  width: 12px;
  height: 12px;
  margin: 0 auto;
}
.search-box {
  width: 202px;
  height: 21px;
  display: flex;
  align-items: center;
  margin-left: 6px;
  padding: 0 4px 0 8px;
  border: 1px solid #5d6d80;
  background: #f2f9fe;
}
.search-box input {
  width: 170px;
  padding: 0;
  border: 0;
  background: none;
  font: italic 11px/14px "Noto Sans", sans-serif;
}
.dialog-toolbar {
  height: 30px;
  margin-top: 10px;
  padding-left: 18px;
  line-height: 27px;
  background: linear-gradient(#f5f9fd, #dbe7f5);
  border-bottom: 1px solid #a9b9cb;
}
.places {
  flex: 1;
  background: #f0f0f0;
}
.places ul {
  list-style: none;
  margin: 0;
  padding: 9px 0 0;
  height: 300px;
  background: #fff;
}
.places li {
  height: 21px;
  display: flex;
  align-items: center;
  gap: 4px;
  padding-left: 29px;
  color: #111;
  font-size: 12px;
}
.places li.head { padding-left: 19px; }
.places li.gap { margin-top: 21px; }
.places li.selected {
  border: 1px solid #dcdcdc;
  padding-left: 18px;
  background: linear-gradient(#f9f9f9, #e9e9e9);
}
.places svg {
  width: 18px;
  height: 17px;
}

/* paint window */
.paint {
  top: 76px;
  left: 103px;
  right: 104px;
  bottom: 39px;
  padding: 0 6px 5px;
  border: 1px solid #17232e;
  border-radius: 7px 7px 0 0;
  background: linear-gradient(#98b5d3, #bbd0e6 30px, #b8d3ec);
  box-shadow: inset 0 0 0 1px #cfe3f4, 0 0 3px rgba(0, 0, 0, .5);
}
.titlebar {
  height: 30px;
  display: flex;
  align-items: center;
  gap: 5px;
  padding: 5px 2px 0 2px;
  color: #111;
}
.titlebar h1 {
  margin: 0;
  font: 11px/16px "Noto Sans", sans-serif;
}
.bar-sep {
  width: 1px;
  height: 14px;
  margin: 0 2px 0 3px;
  background: #71839c;
}
.qat svg {
  width: 16px;
  height: 16px;
}
.qat.more svg { width: 12px; }
.controls {
  display: flex;
  gap: 2px;
  margin-left: auto;
}
.controls button {
  width: 31px;
  height: 17px;
  display: flex;
  align-items: center;
  justify-content: center;
  border: 1px solid #55708f;
  border-radius: 2px;
  background: linear-gradient(#c4d7eb, #a0bcda 50%, #b8d0e8);
  box-shadow: inset 0 0 0 1px #d6e5f3;
}
.controls .close {
  border-color: #581815;
  background: linear-gradient(#e0968a, #bf4030 50%, #ce6c56);
  box-shadow: inset 0 0 0 1px #e7ab9e;
}
.controls svg {
  width: 14px;
  height: 12px;
}
.ribbon-tabs {
  height: 23px;
  display: flex;
  background: #dde7f5;
}
.file-menu {
  width: 56px;
  border: 1px solid #24528e;
  border-radius: 2px 2px 0 0;
  background: linear-gradient(#4b7fc4, #2759a3 50%, #4385d0);
  display: flex;
  align-items: center;
  justify-content: center;
}
.file-menu svg {
  width: 28px;
  height: 12px;
}
.rtab {
  width: 54px;
  margin-left: 2px;
  border: 1px solid transparent;
  border-bottom: 0;
  color: #31435c;
}
.rtab.current {
  border-color: #b9c8dc;
  border-radius: 3px 3px 0 0;
  background: #f8fbff;
  color: #2b538d;
}
.help {
  margin: 0 4px 2px auto;
}
.help svg {
  width: 14px;
  height: 14px;
}
.ribbon {
  height: 92px;
  display: flex;
  padding: 3px 0;
  background: linear-gradient(#f3f8fe, #e3ecf8 55%, #dae5f4);
  border: 1px solid #b6c5d9;
  border-width: 1px 0;
}
.group {
  display: flex;
  flex-direction: column;
  justify-content: space-between;
  border-right: 1px solid #b5c1d3;
  box-shadow: 1px 0 #f7fafe;
}
.clipboard { width: 76px; }
.image { width: 83px; }
.pens { width: 80px; }
.brushes { width: 57px; }
.shapes { width: 83px; }
.size { width: 53px; }
.colors { width: 357px; }
.tools {
  display: flex;
  padding-left: 3px;
}
.brushes .tools,
.colors .tools { padding-left: 5px; }
.label {
  text-align: center;
  color: #6e7e95;
}
.big {
  width: 46px;
  height: 64px;
  flex: none;
  line-height: 13px;
  text-align: center;
  border: 1px solid transparent;
  border-radius: 3px;
}
.big svg {
  width: 32px;
  height: 32px;
  margin: 0 auto 3px;
}
.big.on {
  border-color: #c29a4d;
  background: linear-gradient(#fbd398, #fdc770 50%, #fbb742 58%, #fdd772);
}
.caret {
  display: block;
  width: 0;
  margin: 4px auto 0;
  border: 3px solid transparent;
  border-top-color: #38465a;
  border-bottom: 0;
}
.caret.dim { border-top-color: #949eae; }
.caret.up {
  border-top: 0;
  border-bottom: 3px solid #222;
}
.stack {
  display: flex;
  flex-direction: column;
  gap: 6px;
  padding: 3px 0 0 2px;
}
.image .stack { padding-left: 3px; }
.stack button {
  display: flex;
  align-items: center;
}
.stack svg {
  width: 16px;
  height: 16px;
}
.stack .caret { margin: 0; }
.image .big { width: 47px; }
.pen-rows {
  flex-direction: column;
  gap: 6px;
  padding: 8px 5px 0;
}
.pen-row {
  display: flex;
  border: 1px solid #bac6d8;
  border-radius: 2px;
}
.pen-row button {
  flex: 1;
  height: 21px;
  display: flex;
  align-items: center;
  justify-content: center;
}
.pen-row button + button { border-left: 1px solid #d0daea; }
.pen-row svg {
  width: 16px;
  height: 16px;
}
.pen-row .glyph-a {
  font: bold 18px/20px "Liberation Serif", serif;
  color: #26303f;
}
.colors .big {
  width: 42px;
  height: 66px;
}
.chip {
  display: block;
  width: 33px;
  height: 33px;
  margin: 0 auto 4px;
  border: 1px solid #7b6544;
  box-shadow: inset 0 0 0 1px #fff;
}
.chip.black { background: #000; }
.chip.white {
  width: 25px;
  height: 25px;
  margin: 4px auto 8px;
  border-color: #7b879b;
  background: #fff;
}
.swatches {
  display: grid;
  grid-template-columns: repeat(10, 20px);
  grid-auto-rows: 20px;
  gap: 2px;
  margin: 1px 0 0 1px;
}
.swatches button {
  border: 1px solid #8d94a4;
  box-shadow: inset 0 0 0 1px #fff;
}
.swatches .empty {
  border-color: #a7b0c2;
  box-shadow: none;
}
.spectrum {
  display: block;
  width: 28px;
  height: 28px;
  margin: 2px auto 7px;
  border: 1px solid #8c7f8d;
  box-shadow: inset 0 0 0 1px #fff;
  background:
    linear-gradient(transparent 20%, rgba(128, 128, 128, .8)),
    linear-gradient(to right, #f33, #fe0, #0c3, #0cf, #11d, #e0d, #f33);
}
.workspace {
  flex: 1;
  min-height: 0;
  display: flex;
}
.viewport {
  flex: 1;
  overflow: hidden;
  padding: 5px;
  background: linear-gradient(#c6cee0, #dde7f3);
}
.canvas {
  position: relative;
  width: 614px;
  height: 460px;
  background: #fff;
  box-shadow: 5px 5px 5px rgba(100, 115, 140, .35);
}
.dot {
  position: absolute;
  left: 46px;
  top: 209px;
  width: 3px;
  height: 3px;
  border-radius: 2px;
  background: #111;
}
.cross {
  position: absolute;
  left: 62px;
  top: 224px;
  width: 19px;
  height: 19px;
}
.handle {
  position: absolute;
  left: 614px;
  top: 228px;
  width: 5px;
  height: 5px;
  border: 1px solid #334;
  background: #fff;
}
.scrollbar {
  width: 16px;
  display: flex;
  flex-direction: column;
  background: #f0f0f2;
}
.scrollbar button {
  height: 18px;
}
.scrollbar .caret { margin: 0 auto; }
.thumb {
  flex: 1;
  display: flex;
  flex-direction: column;
  align-items: center;
  justify-content: center;
  gap: 2px;
  margin: 0 1px 31px;
  border: 1px solid #979797;
  border-radius: 2px;
  background: linear-gradient(to right, #f7f7f7, #e6e6ea 50%, #c0c0c8);
}
.thumb i {
  width: 7px;
  height: 1px;
  background: #444;
}
.statusbar {
  height: 27px;
  display: flex;
  align-items: center;
  border-top: 1px solid #8b919a;
  background: #f1efee;
  color: #111;
}
.cell {
  width: 156px;
  height: 22px;
  display: flex;
  align-items: center;
  gap: 4px;
  padding-left: 3px;
  border-right: 1px solid #d3d1d1;
}
.cell + .cell { padding-left: 5px; }
.cell.rest { width: 118px; }
.cell svg {
  width: 14px;
  height: 14px;
}
.zoom {
  display: flex;
  align-items: center;
  margin-left: auto;
}
.zoom label { margin-right: 7px; }
.zoom svg {
  width: 17px;
  height: 17px;
}
.zoom input {
  -webkit-appearance: none;
  appearance: none;
  width: 84px;
  height: 16px;
  margin: 0 12px 0 10px;
  background: linear-gradient(#a9a9a9, #a9a9a9) center / 100% 1px no-repeat;
}
.zoom input::-webkit-slider-thumb {
  -webkit-appearance: none;
  width: 9px;
  height: 15px;
  border: 1px solid #6d6d6d;
  border-radius: 2px 2px 5px 5px;
  background: linear-gradient(to right, #fff, #dedede);
}
.grip {
  width: 10px;
  height: 10px;
  align-self: flex-end;
  margin: 0 1px 1px 11px;
}

/* taskbar */
.taskbar {
  height: 40px;
  display: flex;
  border-top: 1px solid #d3dfeb;
  background: linear-gradient(to right, #7e90a6 0, #8296ae 58px, #a8c1dd 70px, #a8c1dd 78%, #8194ac 84%, #8194ac);
}
.start {
  width: 59px;
  padding-left: 8px;
}
.start svg {
  width: 38px;
  height: 38px;
}
.task {
  width: 60px;
  margin-right: 4px;
  display: flex;
  align-items: center;
  justify-content: center;
  border: 1px solid transparent;
}
.task.open {
  margin-right: 2px;
  border-color: #5b6f88;
  border-radius: 3px;
  background: linear-gradient(135deg, #dae4ee, #a9bed5 60%, #b5c8dc);
  box-shadow: inset 0 0 0 1px #d9e5f0;
}
.task.stacked {
  width: 55px;
  margin-right: 7px;
  box-shadow: inset 0 0 0 1px #d9e5f0, 3px 0 #b6c8db, 4px 0 #5b6f88;
}
.task.current {
  background: linear-gradient(135deg, #f4f7fa, #cfdcea);
}
.tray {
  display: flex;
  align-items: center;
  gap: 8px;
  margin-left: auto;
  color: #fff;
}
.tray svg {
  width: 16px;
  height: 16px;
}
.clock {
  width: 60px;
  margin-left: 4px;
  line-height: 17px;
  text-align: center;
}
.show-desktop {
  width: 16px;
  margin-left: 5px;
  border: 1px solid #8fa1b7;
  background: linear-gradient(to right, #4b5d73, #8293a8);
}
```
